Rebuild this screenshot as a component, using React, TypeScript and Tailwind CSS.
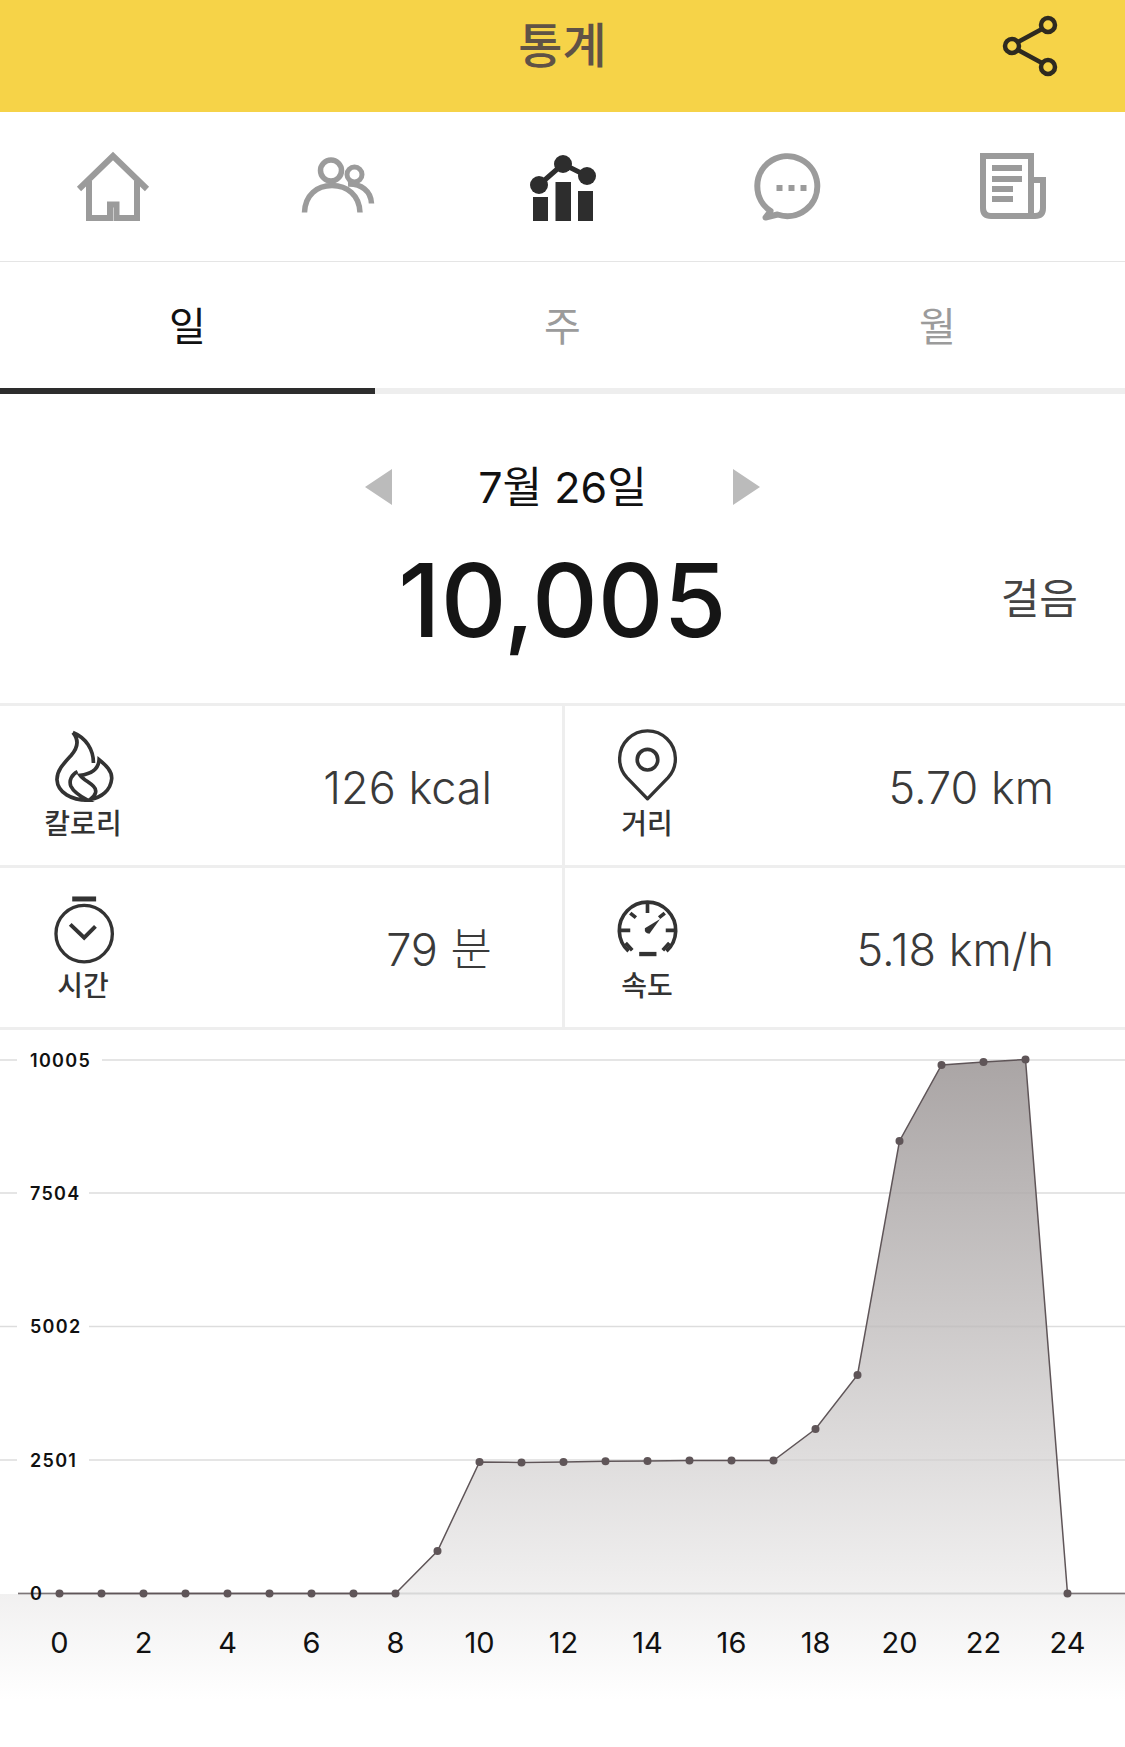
import React from 'react';

const X0 = 59.5;
const STEP = 42;
// y position of each hour's point on the chart
const points = [
  1593.5, 1593.5, 1593.5, 1593.5, 1593.5, 1593.5, 1593.5, 1593.5, 1593.5, 1551, 1462, 1462.5, 1462,
  1461.3, 1461, 1460.5, 1460.5, 1460.5, 1429, 1375, 1141, 1065, 1062, 1059.5, 1593.5,
];
const pts = points.map((y, i) => `${X0 + i * STEP},${y}`).join(' ');

const yLabels = [
  { label: '10005', y: 1060, end: 102 },
  { label: '7504', y: 1193, end: 89 },
  { label: '5002', y: 1326.5, end: 89 },
  { label: '2501', y: 1460, end: 89 },
];

const HomeIcon = () => (
  <svg viewBox="75 150 74 70" className="w-[74px] h-[70px]" fill="none" stroke="#9b9b9b" strokeWidth="6">
    <path d="M78 188 L112 155 L146 188" />
    <path d="M88 180 V217 H109 V203.500 H115.500 V217 H136 V180" />
  </svg>
);

const PeopleIcon = () => (
  <svg viewBox="300 155 74 65" className="w-[74px] h-[65px]" fill="none" stroke="#9b9b9b" strokeWidth="5.5">
    <circle cx="330" cy="172.500" r="10.500" />
    <circle cx="353.500" cy="176.500" r="7.500" strokeWidth="5" />
    <path d="M303.500 214.500 C304 197 316 187.500 331 187.500 C346 187.500 358.500 197 359 214.500" />
    <path d="M347 186 C360 185.500 370 193 370.500 205.500" />
  </svg>
);

const ChartIcon = () => (
  <svg viewBox="525 150 74 70" className="w-[74px] h-[70px]" fill="#2d2d2d">
    <rect x="532" y="196" width="15" height="24" />
    <rect x="554.500" y="181" width="15.500" height="39" />
    <rect x="577" y="190" width="15" height="30" />
    <path d="M538 184 L562 163 L586 175" fill="none" stroke="#2d2d2d" strokeWidth="5" />
    <circle cx="538" cy="184" r="9" />
    <circle cx="562" cy="163" r="9" />
    <circle cx="586" cy="175" r="9" />
  </svg>
);

const ChatIcon = () => (
  <svg viewBox="746.500 148 74 74" className="w-[74px] h-[74px]" fill="none" stroke="#9b9b9b" strokeWidth="6" strokeLinejoin="round">
    <path d="M766 210 A30 30 0 1 1 773 213.500 L761 216.500 Z" />
    <rect x="772" y="184" width="6" height="6" fill="#9b9b9b" stroke="none" />
    <rect x="784" y="184" width="6" height="6" fill="#9b9b9b" stroke="none" />
    <rect x="796" y="184" width="6" height="6" fill="#9b9b9b" stroke="none" />
  </svg>
);

const NewsIcon = () => (
  <svg viewBox="975 150 74 74" className="w-[74px] h-[74px]" fill="none" stroke="#9b9b9b" strokeWidth="6">
    <path d="M982 157 H1030 V217 H990 Q982 217 982 209 Z" />
    <path d="M1030 181 H1042 V209 Q1042 217 1034 217 H1030" />
    <rect x="991" y="166" width="30" height="6" fill="#9b9b9b" stroke="none" />
    <rect x="991" y="177" width="30" height="6" fill="#9b9b9b" stroke="none" />
    <rect x="991" y="187" width="21" height="6" fill="#9b9b9b" stroke="none" />
    <rect x="991" y="197" width="21" height="6" fill="#9b9b9b" stroke="none" />
  </svg>
);

const FlameIcon = () => (
  <svg viewBox="50 20 220 225" className="w-[73px] h-[75px]" fill="none" stroke="#333" strokeWidth="11" strokeLinejoin="miter" strokeMiterlimit="8">
    <path d="M128 36 C168 52 190 88 190 128 M128 36 C150 62 140 86 122 106 C100 130 80 150 80 178 C82 218 125 240 172 240 C150 228 130 215 122 198 C115 180 125 162 142 154" />
    <path d="M207 118 C228 135 246 152 245 175 C242 210 215 232 180 238 C198 225 202 210 190 198 C178 186 160 178 150 165 C175 162 205 152 207 118 Z" />
  </svg>
);

const PinIcon = () => (
  <svg viewBox="60 20 220 225" className="w-[73px] h-[75px]" fill="none" stroke="#333" strokeWidth="10" strokeLinejoin="round">
    <path d="M170 236 L108 172 A84 84 0 1 1 232 172 Z" />
    <circle cx="170" cy="118" r="31" strokeWidth="11" />
  </svg>
);

const TimerIcon = () => (
  <svg viewBox="50 506 220 225" className="w-[73px] h-[75px]" fill="none" stroke="#333">
    <rect x="126" y="528" width="72" height="15" fill="#333" stroke="none" />
    <circle cx="162" cy="640" r="85" strokeWidth="10" />
    <path d="M120 612 L162 652 L196 618" strokeWidth="12" />
  </svg>
);

const SpeedIcon = () => (
  <svg viewBox="60 506 220 225" className="w-[73px] h-[75px]" fill="none" stroke="#333" strokeWidth="11">
    <path d="M113 693 A85 85 0 1 1 227 693" />
    <path d="M170 548 V578 M88 630 H118 M225 630 H253 M118 578 L135 592 M222 578 L205 592 M104 668 L124 690 M236 668 L216 690" />
    <path d="M208 596 L176 640 Q160 640 162 624 Z" fill="#333" stroke="none" />
    <rect x="145" y="695" width="52" height="13" fill="#333" stroke="none" />
  </svg>
);

const Stat = ({ icon, label, value, wide }: { icon: React.ReactNode; label: string; value: string; wide?: boolean }) => (
  <div className={`flex h-[159px] justify-between ${wide ? 'pr-[71px]' : 'pr-[70px]'}`}>
    <div className={`flex flex-col items-center pt-[21px] ${wide ? 'w-[164px]' : 'w-[166px]'}`}>
      {icon}
      <span className="mt-[4px] text-[28px] leading-[36px] font-medium text-[#333]">{label}</span>
    </div>
    <span className="self-center pt-[4px] text-[45px] leading-none font-light text-[#3a3a3a]">{value}</span>
  </div>
);

export default function App() {
  return (
    <div className="w-[1125px] h-[1747px] overflow-hidden bg-white font-['Inter','Noto_Sans_CJK_KR',sans-serif]">
      <header className="relative flex h-[112px] items-center justify-center bg-[#f6d348] pb-[21px]">
        <h1 className="text-[48px] leading-none font-medium text-[#5f5246]">통계</h1>
        <svg viewBox="995 10 65 70" className="absolute right-[64px] top-[10px] w-[65px] h-[70px]" fill="none" stroke="#2e2a20" strokeWidth="4.500">
          <path d="M1017 42 L1041 29 M1017 50 L1041 63" />
          <circle cx="1047" cy="25" r="7" />
          <circle cx="1011" cy="46" r="7" />
          <circle cx="1047" cy="67" r="7" />
        </svg>
      </header>

      <nav className="grid h-[150px] grid-cols-5 items-center justify-items-center border-b border-[#e5e5e5] pb-[2px]">
        <HomeIcon />
        <PeopleIcon />
        <ChartIcon />
        <ChatIcon />
        <NewsIcon />
      </nav>

      <div className="grid h-[132px] grid-cols-3 border-b-[6px] border-[#eeeeee] text-[40px] leading-none">
        <div className="relative flex items-center justify-center pt-[4px] text-[#111]">
          일
          <div className="absolute left-0 right-0 bottom-[-6px] h-[6px] bg-[#2d2d2d]" />
        </div>
        <div className="flex items-center justify-center pt-[4px] text-[#9b9b9b]">주</div>
        <div className="flex items-center justify-center pt-[4px] text-[#9b9b9b]">월</div>
      </div>

      <section className="h-[309px] pt-[75px]">
        <div className="mx-auto flex w-[395px] items-center justify-between">
          <svg viewBox="0 0 27 36" className="w-[27px] h-[36px]" fill="#bbbbbb"><path d="M27 0 V36 L0 18 Z" /></svg>
          <span className="text-[43px] leading-[36px] text-[#111]">7월 26일</span>
          <svg viewBox="0 0 27 36" className="w-[27px] h-[36px]" fill="#bbbbbb"><path d="M0 0 V36 L27 18 Z" /></svg>
        </div>
        <div className="mt-[35px] grid grid-cols-[1fr_auto_1fr] items-center">
          <div />
          <div className="text-[102px] leading-[120px] font-medium text-[#151515]">10,005</div>
          <div className="justify-self-end pr-[47px] pb-[3px] text-[42px] leading-none text-[#444]">걸음</div>
        </div>
      </section>

      <section className="grid grid-cols-[562px_3px_1fr] border-y-[3px] border-[#eeeeee]">
        <Stat icon={<FlameIcon />} label="칼로리" value="126 kcal" />
        <div className="bg-[#eeeeee]" />
        <Stat icon={<PinIcon />} label="거리" value="5.70 km" wide />
        <div className="col-span-3 h-[3px] bg-[#eeeeee]" />
        <Stat icon={<TimerIcon />} label="시간" value="79 분" />
        <div className="bg-[#eeeeee]" />
        <Stat icon={<SpeedIcon />} label="속도" value="5.18 km/h" wide />
      </section>

      <svg viewBox="0 1030 1125 717" className="block w-[1125px] h-[717px]">
        <defs>
          <linearGradient id="area" gradientUnits="userSpaceOnUse" x1="0" y1="1060" x2="0" y2="1700">
            <stop offset="0" stopColor="#aaa5a5" />
            <stop offset="1" stopColor="#ffffff" />
          </linearGradient>
          <clipPath id="areaClip">
            <polygon points={`${X0},1593.5 ${pts}`} />
          </clipPath>
        </defs>
        <rect x="0" y="1594" width="1125" height="110" fill="url(#area)" />
        {yLabels.map(l => (
          <g key={l.label}>
            <path d={`M0 ${l.y} H17 M${l.end} ${l.y} H1125`} stroke="#dddddd" strokeWidth="1.500" />
            <text x="30" y={l.y + 6.500} fontSize="18" fontWeight="600" letterSpacing="1.300" fill="#111">{l.label}</text>
          </g>
        ))}
        <polygon points={`${X0},1593.5 ${pts}`} fill="url(#area)" />
        <g clipPath="url(#areaClip)">
          {yLabels.map(l => (
            <path key={l.label} d={`M${X0} ${l.y} H1068`} stroke="#999" strokeOpacity="0.150" strokeWidth="1.500" />
          ))}
        </g>
        <path d="M18 1593.500 H1125" stroke="#d8d8d8" strokeWidth="2" />
        <path d="M18 1593.500 H396 M1068 1593.500 H1125" stroke="#7d7678" strokeWidth="1.500" />
        <polyline points={pts} fill="none" stroke="#5f5558" strokeWidth="1.500" />
        {points.map((y, i) => (
          <circle key={i} cx={X0 + i * STEP} cy={y} r="4" fill="#5f5558" />
        ))}
        <text x="30" y="1600" fontSize="18" fontWeight="600" fill="#111">0</text>
        {points.map((_, i) =>
          i % 2 === 0 ? (
            <text key={i} x={X0 + i * STEP} y="1653" textAnchor="middle" fontSize="29" fill="#111">
              {i}
            </text>
          ) : null
        )}
      </svg>
    </div>
  );
}
